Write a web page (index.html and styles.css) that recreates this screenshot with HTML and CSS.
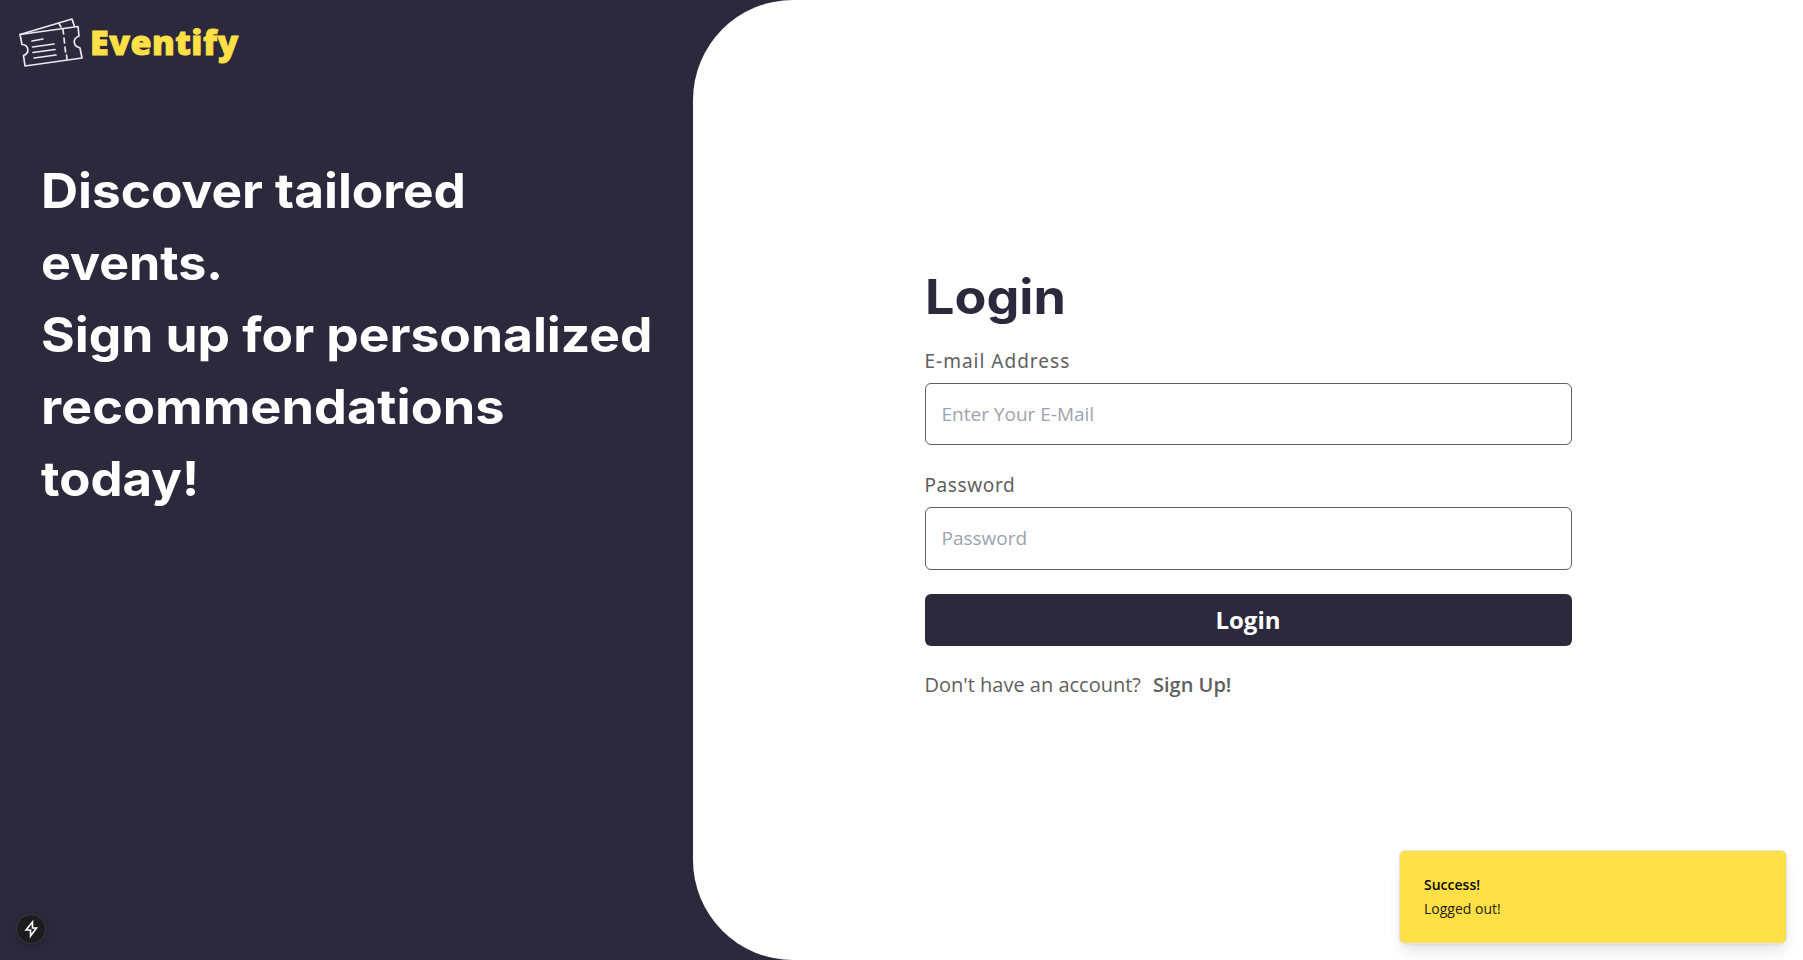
FILE: index.html
```html
<!DOCTYPE html>
<html lang="en">
<head>
<meta charset="utf-8">
<title>Eventify</title>
<link rel="stylesheet" href="styles.css">
</head>
<body>
<div class="page">
  <aside class="intro">
    <header class="brand">
      <svg class="brand-icon" viewBox="0 0 66 52" fill="none" stroke="#e9e9ee" stroke-width="1.7" stroke-linejoin="round" stroke-linecap="round">
        <path d="M2 17.500 L60 9.500 L61 19 C54 22 55 29 62 31 L64 41 L7 49 L5.500 38.500 C12 36 11 28 4 27.500 Z"/>
        <path d="M2 17.500 L54 2 L56.500 9.500 M41 6.500 L43 10"/>
        <path d="M45 12.500 L45.500 17 M46 21 L46.500 26 M47 30 L47.500 35 M48.500 38 L49 42"/>
        <path d="M14 24 L25 22 M14.500 30 L36 27 M15 35.500 L37 32.500 M16 41 L38 38"/>
      </svg>
      <span class="brand-name">Eventify</span>
    </header>
    <h1 class="headline">
      <span class="line line-1">Discover tailored</span>
      <span class="line line-2">events.</span>
      <span class="line line-3">Sign up for personalized</span>
      <span class="line line-4">recommendations</span>
      <span class="line line-5">today!</span>
    </h1>
  </aside>
  <main class="panel">
    <form class="login">
      <h2 class="title">Login</h2>
      <label class="label label-email" for="email">E-mail Address</label>
      <input class="field" id="email" type="email" placeholder="Enter Your E-Mail">
      <label class="label label-password" for="password">Password</label>
      <input class="field field-password" id="password" type="password" placeholder="Password">
      <button class="submit" type="button">Login</button>
      <p class="signup">Don't have an account?<a class="signup-link">Sign Up!</a></p>
    </form>
  </main>
</div>
<div class="toast" role="status">
  <div class="toast-title">Success!</div>
  <div class="toast-text">Logged out!</div>
</div>
<div class="badge">
  <svg class="badge-icon" viewBox="0 0 16 20" fill="none" stroke="#fff" stroke-width="1.6">
    <path d="M9.500 3 L3 11 H7.500 V17 L13.500 9 H9.500 Z"/>
  </svg>
</div>
</body>
</html>
```
FILE: styles.css
```css
* { box-sizing: border-box; }
body {
  margin: 0;
  height: 960px;
  overflow: hidden;
  background: #2c293d;
  font-family: "Open Sans", "Noto Sans", sans-serif;
}
.page { display: flex; height: 960px; }
.intro { width: 693px; flex: none; color: #fff; }
.brand { display: flex; align-items: center; height: 86px; padding-left: 18px; }
.brand-icon { width: 66px; height: 52px; flex: none; }
.brand-name {
  margin: -3px 0 0 6px;
  color: #ffe047;
  font-family: "Noto Sans", sans-serif;
  font-weight: 900;
  font-size: 34px;
  line-height: 48px;
  letter-spacing: 0.5px;
  -webkit-text-stroke: 0.9px #ffe047;
}
.headline {
  margin: 0;
  padding: 69px 0 0 41px;
  font-family: Inter, sans-serif;
  font-weight: 700;
  font-size: 48px;
  line-height: 72px;
}
.line { display: block; white-space: nowrap; transform-origin: left center; }
.line-1 { transform: scaleX(1.07); }
.line-2 { transform: scaleX(1.045); }
.line-3 { transform: scaleX(1.073); }
.line-4 { transform: scaleX(1.089); }
.line-5 { transform: scaleX(1.062); }
.panel {
  flex: 1;
  display: flex;
  justify-content: center;
  background: #fff;
  border-radius: 100px 0 0 100px;
}
.login { width: 647px; padding-top: 261px; display: flex; flex-direction: column; color: #5f5f5f; }
.title {
  margin: 0;
  color: #2c293d;
  font-family: Inter, sans-serif;
  font-weight: 700;
  font-size: 48px;
  line-height: 72px;
  transform: scaleX(1.085);
  transform-origin: left center;
}
.label {
  height: 30px;
  font-family: "Noto Sans", sans-serif;
  font-size: 19px;
  line-height: 30px;
  letter-spacing: 1px;
}
.label-email { margin: 13px 0 7px; }
.label-password { margin: 25px 0 7px; letter-spacing: 0.6px; }
.field {
  width: 100%;
  height: 62px;
  padding: 0 16px;
  border: 1px solid #5f5f5f;
  border-radius: 6px;
  background: #fff;
  font-family: inherit;
  font-size: 19px;
}
.field-password { height: 63px; padding-bottom: 2px; }
.field::placeholder { color: #9ca3af; opacity: 1; }
.submit {
  margin-top: 24px;
  height: 52px;
  padding: 0;
  border: 0;
  border-radius: 6px;
  background: #2c293d;
  color: #fff;
  font: 700 24px/52px "Open Sans", sans-serif;
}
.signup { margin: 24px 0 0; font-size: 20px; line-height: 30px; }
.signup-link { margin-left: 12px; font-weight: 600; }
.toast {
  position: absolute;
  right: 16px;
  bottom: 16px;
  width: 388px;
  height: 94px;
  padding: 24px;
  border: 1px solid #e2e3e8;
  border-radius: 6px;
  background: #ffe047;
  color: #0a0a0a;
  font-size: 14px;
  line-height: 20px;
  box-shadow: 0 10px 15px -3px rgba(0,0,0,.1), 0 4px 6px -4px rgba(0,0,0,.1);
}
.toast-title { font-weight: 600; }
.toast-text { margin-top: 4px; opacity: .9; }
.badge {
  position: absolute;
  left: 16px;
  top: 914px;
  width: 30px;
  height: 30px;
  display: flex;
  align-items: center;
  justify-content: center;
  border: 1px solid #3a3a3e;
  border-radius: 50%;
  background: #1c1c1e;
  box-shadow: 0 4px 16px rgba(0,0,0,.2);
}
.badge-icon { width: 16px; height: 20px; }
```
